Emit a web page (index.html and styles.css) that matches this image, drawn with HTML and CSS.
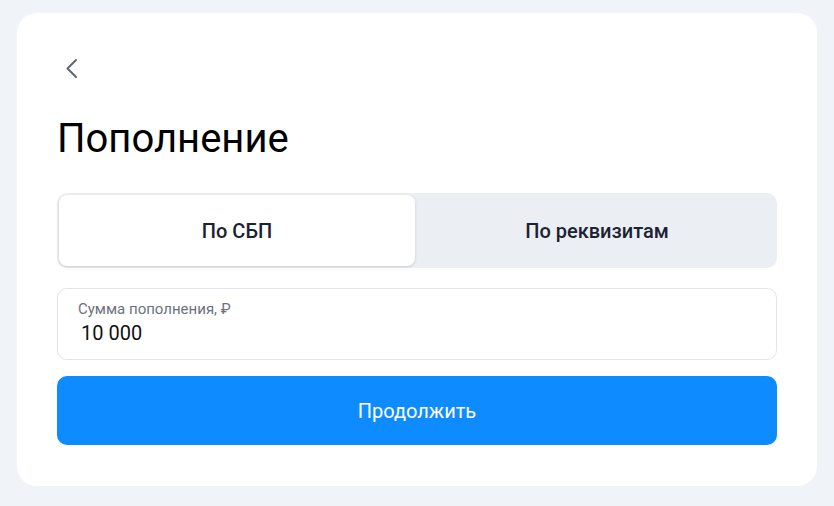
FILE: index.html
```html
<!DOCTYPE html>
<html lang="ru">
<head>
<meta charset="utf-8">
<link rel="stylesheet" href="styles.css">
</head>
<body>
<div class="card">
  <button class="back" aria-label="Назад">
    <svg width="24" height="24" viewBox="0 0 24 24" fill="none"><path d="M17 3 L8.5 11.5 L17 20" stroke="#5f6678" stroke-width="2" stroke-linecap="round" stroke-linejoin="round"/></svg>
  </button>
  <h1 class="title">Пополнение</h1>
  <div class="tabs">
    <div class="tab active">По СБП</div>
    <div class="tab">По реквизитам</div>
  </div>
  <div class="field">
    <div class="label">Сумма пополнения, ₽</div>
    <div class="value">10 000</div>
  </div>
  <button class="submit">Продолжить</button>
</div>
</body>
</html>
```
FILE: styles.css
```css
* { box-sizing: border-box; }
html, body { margin: 0; padding: 0; }
body {
  background: #f0f4f9;
  font-family: Roboto, "Noto Sans", sans-serif;
  padding: 13px 17px 20px 17px;
  width: 834px;
  height: 506px;
}
.card {
  background: #ffffff;
  border-radius: 20px;
  width: 800px;
  height: 473px;
  padding: 44px 40px 40px 40px;
  display: flex;
  flex-direction: column;
}
.back {
  width: 24px;
  height: 24px;
  padding: 0;
  margin: 0 0 0 2px;
  border: 0;
  background: transparent;
  display: flex;
  align-items: center;
  justify-content: center;
}
.title {
  margin: 34px 0 0 0;
  font-size: 40px;
  line-height: 48px;
  font-weight: 400;
  color: #000;
}
.tabs {
  margin-top: 30px;
  height: 75px;
  background: #ebeef2;
  border-radius: 10px;
  padding: 2px;
  gap: 4px;
  display: flex;
}
.tab {
  flex: 1;
  display: flex;
  align-items: center;
  justify-content: center;
  font-size: 20px;
  font-weight: 500;
  color: #1b2233;
  border-radius: 8px;
}
.tab.active {
  background: #fff;
  box-shadow: 0 1px 3px rgba(0,0,0,0.15);
}
.field {
  margin-top: 20px;
  height: 72px;
  border: 1px solid #e1e4e9;
  border-radius: 10px;
  padding: 11px 20px 0 20px;
}
.label {
  font-size: 15px;
  line-height: 18px;
  color: #6b7280;
}
.value {
  margin-top: 2px;
  padding-left: 3px;
  font-size: 20px;
  line-height: 26px;
  color: #111;
}
.submit {
  margin-top: 16px;
  height: 69px;
  border: 0;
  border-radius: 10px;
  background: #0e8bff;
  color: #fff;
  font-family: Roboto, "Noto Sans", sans-serif;
  font-size: 20px;
  font-weight: 400;
}
```
